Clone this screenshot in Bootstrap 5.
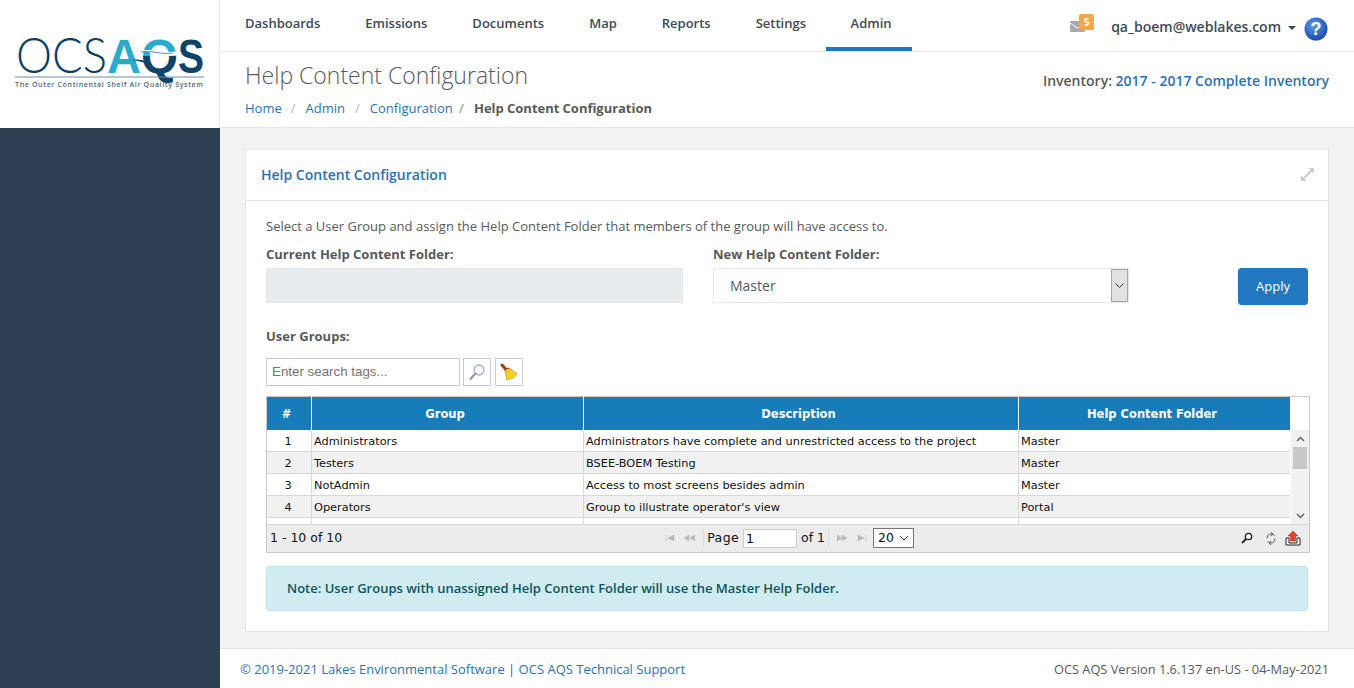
<!DOCTYPE html>
<html lang="en">
<head>
  <meta charset="UTF-8" />
  <meta name="viewport" content="width=device-width, initial-scale=1.0" />
  <title>Help Content Configuration</title>
  <link href="https://cdn.jsdelivr.net/npm/bootstrap@5.3.0/dist/css/bootstrap.min.css" rel="stylesheet" />
  <style>
    html, body { height: 100%; }
    body { margin: 0; overflow: hidden; background: #f1f2f2; font-family: "Open Sans", "Liberation Sans", sans-serif; font-size: 13px; color: #58595b; }
    a { color: #2a72b5; text-decoration: none; }
    .app-shell { height: 688px; }
    .side-col { width: 220px; flex: 0 0 220px; background: #2c3e50; }
    .logo-box { height: 128px; background: #fff; border-right: 1px solid #e7e7e7; padding: 20px 0 0 14px; }
    .logo-box svg { display: block; }
    .main-col { min-width: 0; }
    .top-nav { height: 52px; background: #fff; border-bottom: 1px solid #e7e7e7; padding-left: 2.5px; }
    .top-nav .nav-link { height: 51px; padding: 14px 22.5px 0; font-size: 13px; font-weight: 600; color: #3d4a57; border-bottom: 4px solid transparent; }
    .top-nav .nav-link.active { border-bottom-color: #2278c0; padding-left: 25px; padding-right: 20px; margin-left: -3px; }
    .mail-wrap { position: relative; width: 16px; height: 12px; margin-right: 25px; margin-top: 2px; }
    .mail-count { position: absolute; left: 9px; top: -7px; width: 15px; height: 16px; border-radius: 2px; background: #f5a54c; color: #fff; font-size: 10px; font-weight: 700; line-height: 16px; text-align: center; }
    .user-name { font-size: 14px; font-weight: 600; color: #3d4a57; margin-top: 2px; }
    .caret-down { width: 0; height: 0; border-left: 4px solid transparent; border-right: 4px solid transparent; border-top: 4px solid #3d4a57; margin: 4px 8px 0 7px; }
    .help-icon { margin-top: 6px; }
    .right-tools { padding-right: 26px; }
    .page-head { height: 76px; background: #fff; border-bottom: 1px solid #e7e7e7; padding: 8px 25px 0; }
    .page-title { font-size: 23px; font-weight: 300; color: #58595b; line-height: 31px; margin: 0; }
    .crumbs { font-size: 13px; margin: 8px 0 0; --bs-breadcrumb-divider-color: #b4b4b4; --bs-breadcrumb-item-padding-x: 10px; }
    .crumbs .active { color: #58595b; font-weight: 700; margin-left: -4px; letter-spacing: -.03px; }
    .crumbs .crumb-second { margin-left: -1px; }
    .inv-text { font-size: 14px; font-weight: 600; color: #58595b; margin-top: 10px; }
    .content-area { flex: 1 1 auto; padding: 21px 25px 16px; min-height: 0; }
    .help-panel { height: 483px; border: 1px solid #e7e7e7; border-radius: 0; background: #fff; }
    .help-panel-head { height: 51px; padding: 0 14px 2px 15px; border-bottom: 1px solid #e7e7e7; }
    .help-panel-title { font-size: 14px; font-weight: 600; color: #2a72b5; }
    .help-panel-body { padding: 15px 20px 0; }
    .intro-line { line-height: 20px; margin-bottom: 9px; }
    .field-label { font-weight: 700; line-height: 18px; margin-bottom: 5px; }
    .folder-col { width: 417px; }
    .folder-col-b { width: 416px; margin-left: 30px; }
    .folder-input { height: 35px; border-radius: 0; border: 1px solid #e7e7e7; background: #e9ecef; }
    .folder-select { height: 35px; border: 1px solid #e7e7e7; background: #fff; }
    .folder-select select { appearance: none; border: 0; background: none; flex: 1 1 auto; font-size: 14px; color: #58595b; padding: 0 16px; outline: 0; font-family: inherit; }
    .select-arrow { width: 17px; background: #e1e1e1; border: 1px solid #a6a6a6; }
    .apply-btn { width: 70px; height: 37px; margin-left: 109px; margin-top: 23px; padding: 1px 0 0; border-radius: 3px; background: #2278c0; border-color: #2278c0; font-size: 13px; }
    .groups-label { font-weight: 700; line-height: 18px; margin: 22px 0 13px; }
    .tag-input { width: 194px; height: 28px; border: 1px solid #ccc; padding: 0 5px 2px; font-family: "Liberation Sans", sans-serif; font-size: 13.33px; color: #333; outline: 0; }
    .tag-input::placeholder { color: #757575; }
    .tool-btn { width: 28px; height: 28px; border: 1px solid #ccc; background: #fff; padding: 0; margin-left: 4px; }
    .tool-btn.first-tool { margin-left: 3px; }
    .tool-btn svg { display: block; margin: auto; }
    .grid-box { width: 1044px; height: 157px; margin-top: 10px; border: 1px solid #c9c9c9; border-bottom-width: 2px; font-family: "DejaVu Sans", Verdana, sans-serif; font-size: 11.33px; color: #111; }
    .grid-head-row { height: 33px; }
    .grid-head { background: #167dba; color: #fff; font-weight: 700; font-size: 11.5px; text-align: center; border-right: 1px solid #fff; padding: 2px 5px 0 0; }
    .w-num { width: 45px; flex: 0 0 45px; }
    .w-group { width: 272px; flex: 0 0 272px; }
    .w-desc { width: 435px; flex: 0 0 435px; }
    .w-folder { width: 272px; flex: 0 0 272px; }
    .grid-body { height: 94px; }
    .grid-rows { width: 1024px; overflow: hidden; }
    .grid-line { height: 22px; border-bottom: 1px solid #d8d8d8; }
    .grid-line.alt { background: #f1f1f1; }
    .grid-cell { padding: 0 2px; border-right: 1px solid #d8d8d8; white-space: nowrap; overflow: hidden; line-height: 22px; }
    .grid-cell.w-num { text-align: center; padding-right: 4px; }
    .fake-scroll { width: 18px; margin-left: 1px; background: #f1f1f1; }
    .scroll-thumb { height: 22px; margin: 0 2px 0 2px; background: #c8c8c8; }
    .scroll-btn { height: 17px; }
    .grid-pager { height: 28px; background: #ececec; border-top: 1px solid #d8d8d8; padding: 0 8px 1px 3px; font-size: 12.5px; white-space: nowrap; }
    .pager-count { flex: 0 0 72px; }
    .pager-mid { margin-left: 323px; }
    .pg-sep { width: 1px; height: 18px; background: #ddd; margin: 0 3px; }
    .pg-sep-a { margin-left: 8px; }
    .pg-word { letter-spacing: .4px; }
    .pg-input { width: 54px; height: 19px; border: 1px solid #ccc; font-size: 12.5px; padding: 0 2px; margin: 0 4px; font-family: inherit; }
    .pg-next { margin: 0 6px 0 5px; }
    .pg-size { width: 41px; height: 20px; border: 1px solid #767676; background: #fff; padding: 0 4px; }
    .note-box { width: 1042px; height: 45px; margin: 13px 0 0; padding: 0 20px; border-radius: 3px; background: #d1ecf1; border: 1px solid #bee5eb; color: #0c5460; font-weight: 600; display: flex; align-items: center; }
    .page-foot { height: 40px; background: #fff; border-top: 1px solid #e7e7e7; padding: 2px 25px 0 20px; font-size: 13px; }
    .version-text { font-size: 12.8px; }
  </style>
</head>
<body>
  <div class="app-shell d-flex">
    <div class="side-col">
      <div class="logo-box">
        <svg width="205" height="76" viewBox="0 0 205 76">
          <defs>
            <linearGradient id="qFill" x1="0" y1="0" x2="0" y2="1">
              <stop offset="0.5" stop-color="#29abce" />
              <stop offset="0.5" stop-color="#0f4469" />
            </linearGradient>
          </defs>
          <text x="2" y="52.500" font-family="Lato, 'Open Sans', sans-serif" font-weight="300" font-size="50" textLength="91" lengthAdjust="spacingAndGlyphs" fill="#0f3f62">OCS</text>
          <text x="93" y="52.500" font-family="'Liberation Sans', sans-serif" font-weight="700" font-size="48" textLength="34" lengthAdjust="spacingAndGlyphs" fill="#29abce">A</text>
          <text x="127" y="52.500" font-family="'Liberation Sans', sans-serif" font-weight="700" font-size="48" textLength="37" lengthAdjust="spacingAndGlyphs" fill="url(#qFill)">Q</text>
          <text x="164" y="52.500" font-family="'Liberation Sans', sans-serif" font-weight="700" font-size="48" textLength="26" lengthAdjust="spacingAndGlyphs" fill="#0f4469">S</text>
          <path d="M118 40c9-2 15 2 20 5-6-2-12-4-20-5z" fill="#0f4469" />
          <path d="M126 31c10-3 20 2 30 1 4 0 7-1 9-1l-1 4c-12 3-25-3-38-4z" fill="#fff" />
          <path d="M127 32c10-2 22 3 32 1" fill="none" stroke="#1c5fa8" stroke-width=".7" />
          <line x1="1" y1="57" x2="190" y2="57" stroke="#6f8aa0" stroke-width="1" />
          <text x="1" y="67" font-family="'Open Sans', sans-serif" font-weight="600" font-size="7" textLength="188" fill="#44688a">The Outer Continental Shelf Air Quality System</text>
        </svg>
      </div>
    </div>

    <div class="main-col flex-grow-1 d-flex flex-column">
      <div class="top-nav d-flex justify-content-between">
        <ul class="nav">
          <li class="nav-item"><a class="nav-link" href="#">Dashboards</a></li>
          <li class="nav-item"><a class="nav-link" href="#">Emissions</a></li>
          <li class="nav-item"><a class="nav-link" href="#">Documents</a></li>
          <li class="nav-item"><a class="nav-link" href="#">Map</a></li>
          <li class="nav-item"><a class="nav-link" href="#">Reports</a></li>
          <li class="nav-item"><a class="nav-link" href="#">Settings</a></li>
          <li class="nav-item"><a class="nav-link active" href="#">Admin</a></li>
        </ul>
        <div class="d-flex align-items-center right-tools">
          <div class="mail-wrap">
            <svg width="15" height="11" viewBox="0 0 15 11" class="d-block"><rect width="15" height="11" rx="1" fill="#a7a9ac" /><path d="M0 2l7.500 5L15 2" fill="none" stroke="#fff" stroke-width="1" /></svg>
            <span class="mail-count">5</span>
          </div>
          <span class="user-name">qa_boem@weblakes.com</span>
          <span class="caret-down"></span>
          <svg class="help-icon" width="24" height="24" viewBox="0 0 24 24">
            <defs><radialGradient id="helpGrad" cx="0.4" cy="0.35" r="0.7"><stop offset="0" stop-color="#5f9be6" /><stop offset="1" stop-color="#1648a8" /></radialGradient></defs>
            <circle cx="12" cy="12" r="11.500" fill="url(#helpGrad)" />
            <text x="12" y="18" text-anchor="middle" font-family="'Liberation Sans', sans-serif" font-weight="700" font-size="18" fill="#fff">?</text>
          </svg>
        </div>
      </div>

      <div class="page-head d-flex justify-content-between">
        <div>
          <h1 class="page-title">Help Content Configuration</h1>
          <ol class="breadcrumb crumbs">
            <li class="breadcrumb-item"><a href="#">Home</a></li>
            <li class="breadcrumb-item crumb-second"><a href="#">Admin</a></li>
            <li class="breadcrumb-item"><a href="#">Configuration</a></li>
            <li class="breadcrumb-item active">Help Content Configuration</li>
          </ol>
        </div>
        <div class="inv-text">Inventory: <a href="#">2017 - 2017 Complete Inventory</a></div>
      </div>

      <div class="content-area">
        <div class="card help-panel">
          <div class="help-panel-head d-flex justify-content-between align-items-center">
            <span class="help-panel-title">Help Content Configuration</span>
            <svg width="13" height="13" viewBox="0 0 13 13"><path d="M1.500 11.500l10-10" stroke="#ccc" stroke-width="2" /><path d="M7.500 0H13v5.500zM0 7.500V13h5.500z" fill="#ccc" /></svg>
          </div>
          <div class="help-panel-body">
            <div class="intro-line">Select a User Group and assign the Help Content Folder that members of the group will have access to.</div>
            <div class="d-flex align-items-start">
              <div class="folder-col">
                <div class="field-label">Current Help Content Folder:</div>
                <input class="form-control folder-input" type="text" disabled />
              </div>
              <div class="folder-col-b">
                <div class="field-label">New Help Content Folder:</div>
                <div class="folder-select d-flex">
                  <select><option>Master</option></select>
                  <span class="select-arrow d-flex align-items-center justify-content-center">
                    <svg width="9" height="5" viewBox="0 0 9 5"><path d="M.5.5l4 4 4-4" fill="none" stroke="#333" /></svg>
                  </span>
                </div>
              </div>
              <button class="btn btn-primary apply-btn" type="button">Apply</button>
            </div>

            <div class="groups-label">User Groups:</div>
            <div class="d-flex">
              <input class="tag-input" type="text" placeholder="Enter search tags..." />
              <button class="tool-btn first-tool" type="button" aria-label="Search">
                <svg width="18" height="18" viewBox="0 0 18 18"><circle cx="11" cy="7" r="5" fill="#f4f8fb" stroke="#9fb3c4" stroke-width="1.300" /><path d="M7.500 10.500L2.500 16" stroke="#9a9a9a" stroke-width="2.200" stroke-linecap="round" /></svg>
              </button>
              <button class="tool-btn" type="button" aria-label="Clear">
                <svg width="18" height="18" viewBox="0 0 18 18"><path d="M2 2l4 4.500" stroke="#8a4b14" stroke-width="3" stroke-linecap="round" /><path d="M4.500 7L9 5l8 5.500c-1 3-5 6-10.500 6C6 13 6 10 4.500 7z" fill="#f2d21f" stroke="#b69412" stroke-width=".7" /><path d="M4.500 7L9 5" stroke="#c0392b" stroke-width="1.200" /></svg>
              </button>
            </div>

            <div class="grid-box">
              <div class="grid-head-row d-flex">
                <div class="grid-head w-num d-flex align-items-center justify-content-center">#</div>
                <div class="grid-head w-group d-flex align-items-center justify-content-center">Group</div>
                <div class="grid-head w-desc d-flex align-items-center justify-content-center">Description</div>
                <div class="grid-head w-folder d-flex align-items-center justify-content-center">Help Content Folder</div>
              </div>
              <div class="grid-body d-flex">
                <div class="grid-rows">
                  <div class="grid-line d-flex"><div class="grid-cell w-num">1</div><div class="grid-cell w-group">Administrators</div><div class="grid-cell w-desc">Administrators have complete and unrestricted access to the project</div><div class="grid-cell w-folder">Master</div></div>
                  <div class="grid-line alt d-flex"><div class="grid-cell w-num">2</div><div class="grid-cell w-group">Testers</div><div class="grid-cell w-desc">BSEE-BOEM Testing</div><div class="grid-cell w-folder">Master</div></div>
                  <div class="grid-line d-flex"><div class="grid-cell w-num">3</div><div class="grid-cell w-group">NotAdmin</div><div class="grid-cell w-desc">Access to most screens besides admin</div><div class="grid-cell w-folder">Master</div></div>
                  <div class="grid-line alt d-flex"><div class="grid-cell w-num">4</div><div class="grid-cell w-group">Operators</div><div class="grid-cell w-desc">Group to illustrate operator's view</div><div class="grid-cell w-folder">Portal</div></div>
                  <div class="grid-line d-flex"><div class="grid-cell w-num">&nbsp;</div><div class="grid-cell w-group">&nbsp;</div><div class="grid-cell w-desc">&nbsp;</div><div class="grid-cell w-folder">&nbsp;</div></div>
                </div>
                <div class="fake-scroll d-flex flex-column">
                  <div class="scroll-btn d-flex align-items-center justify-content-center"><svg width="9" height="6" viewBox="0 0 9 6"><path d="M1 5l3.500-3.500L8 5" fill="none" stroke="#666" stroke-width="1.500" /></svg></div>
                  <div class="scroll-thumb"></div>
                  <div class="scroll-btn d-flex align-items-center justify-content-center mt-auto"><svg width="9" height="6" viewBox="0 0 9 6"><path d="M1 1l3.500 3.500L8 1" fill="none" stroke="#666" stroke-width="1.500" /></svg></div>
                </div>
              </div>
              <div class="grid-pager d-flex align-items-center">
                <span class="pager-count">1 - 10 of 10</span>
                <div class="pager-mid d-flex align-items-center">
                  <svg width="30" height="8" viewBox="0 0 30 8"><path d="M1 1v6M9 1L3 4l6 3zM24 1l-5 3 5 3zM30 1l-5 3 5 3z" fill="#bbb" stroke="#bbb" stroke-width=".6" /></svg>
                  <span class="pg-sep pg-sep-a"></span>
                  <span class="pg-word">Page</span>
                  <input class="pg-input" type="text" value="1" />
                  <span>of 1</span>
                  <span class="pg-sep"></span>
                  <svg class="pg-next" width="30" height="8" viewBox="0 0 30 8"><path d="M0 1l5 3-5 3zM5 1l5 3-5 3zM21 1l6 3-6 3zM29 1v6" fill="#bbb" stroke="#bbb" stroke-width=".6" /></svg>
                  <div class="pg-size d-flex align-items-center justify-content-between"><span>20</span><svg width="10" height="6" viewBox="0 0 10 6"><path d="M1 1l4 4 4-4" fill="none" stroke="#444" /></svg></div>
                </div>
                <div class="ms-auto d-flex align-items-center gap-2">
                  <svg width="12" height="12" viewBox="0 0 12 12"><circle cx="7.500" cy="4.500" r="3.200" fill="#f4f4f4" stroke="#222" stroke-width="1.300" /><path d="M5 7L1 11" stroke="#222" stroke-width="1.800" /></svg>
                  <svg class="ms-1" width="12" height="13" viewBox="0 0 12 13"><path d="M9.500 3.500A4.200 4.200 0 0 0 2 6.500M2.500 9.500A4.200 4.200 0 0 0 10 6.500" fill="none" stroke="#555" /><path d="M6 0l2 2.200L5.500 4M6 13l-2-2.200L6.500 9" fill="none" stroke="#555" stroke-width=".9" /></svg>
                  <svg width="16" height="15" viewBox="0 0 16 15"><path d="M1 7v7h14V7h-3v5H4V7z" fill="#fff" stroke="#222" /><path d="M8 0l5 5h-2.500v5h-5V5H3z" fill="#e8402a" stroke="#a3261a" stroke-width=".5" /></svg>
                </div>
              </div>
            </div>

            <div class="alert alert-info note-box" role="alert">Note: User Groups with unassigned Help Content Folder will use the Master Help Folder.</div>
          </div>
        </div>
      </div>

      <div class="page-foot d-flex justify-content-between align-items-center">
        <div><a href="#">© 2019-2021 Lakes Environmental Software</a> | <a href="#">OCS AQS Technical Support</a></div>
        <div class="version-text">OCS AQS Version 1.6.137 en-US - 04-May-2021</div>
      </div>
    </div>
  </div>
  <script src="https://cdn.jsdelivr.net/npm/bootstrap@5.3.0/dist/js/bootstrap.bundle.min.js"></script>
</body>
</html>
